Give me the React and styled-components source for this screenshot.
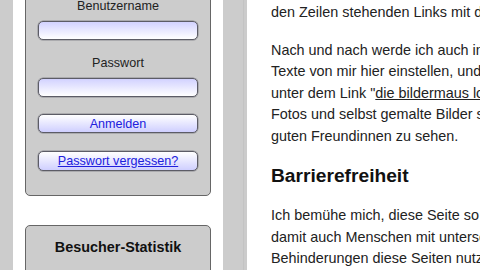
import React from "react";
import styled, { createGlobalStyle } from "styled-components";

const Global = createGlobalStyle`
  html, body {
    margin: 0;
    padding: 0;
    overflow: hidden;
    background: #ffffff;
  }
  body {
    font-family: "Liberation Sans", Arial, sans-serif;
    color: #222222;
  }
`;

function App() {
  return (
    <>
      <Global />
      <Page>
        <Stripe />
        <Sidebar>
          <Box>
            <Label>Benutzername</Label>
            <Input type="text" />
            <Label $gap>Passwort</Label>
            <Input type="password" />
            <Button $top={17}>Anmelden</Button>
            <Button $top={18} $link>
              <a href="#vergessen">Passwort vergessen?</a>
            </Button>
          </Box>
          <Box $second>
            <BoxTitle>Besucher-Statistik</BoxTitle>
          </Box>
        </Sidebar>
        <Stripe $shade />
        <Content>
          <Para $first>
            den Zeilen stehenden Links mit den entsprechenden Seiten verbunden.
          </Para>
          <Para>
            Nach und nach werde ich auch immer mehr Gedichte und
            <br />
            Texte von mir hier einstellen, und außerdem sind
            <br />
            unter dem Link "<Underline href="#bildermaus">die bildermaus lobt</Underline>" einige
            <br />
            Fotos und selbst gemalte Bilder sowie Werke meiner
            <br />
            guten Freundinnen zu sehen.
          </Para>
          <Heading>Barrierefreiheit</Heading>
          <Para>
            Ich bemühe mich, diese Seite so barrierefrei wie möglich zu gestalten,
            <br />
            damit auch Menschen mit unterschiedlichen
            <br />
            Behinderungen diese Seiten nutzen können.
          </Para>
        </Content>
      </Page>
    </>
  );
}

export default App;

const Page = styled.div`
  display: grid;
  grid-template-columns: 13px 210px 24px 1fr;
  width: 480px;
  height: 270px;
  overflow: hidden;
`;

const Stripe = styled.div`
  background: ${(p) =>
    p.$shade
      ? "linear-gradient(to right, #cccccc 0 20px, #c3c3c3 20px 21px, #cbcbcb 21px)"
      : "#cccccc"};
`;

const Sidebar = styled.div`
  display: flex;
  flex-direction: column;
  padding: 0 12px;
`;

const Box = styled.div`
  display: flex;
  flex-direction: column;
  align-items: center;
  background: #cccccc;
  border: 1px solid #666666;
  border-radius: 5px;
  margin-top: ${(p) => (p.$second ? "29px" : "-10px")};
  padding: ${(p) => (p.$second ? "13px 12px 30px" : "8px 12px 24px")};
`;

const Label = styled.div`
  font-size: 12.6px;
  line-height: 15px;
  color: #222222;
  margin-top: ${(p) => (p.$gap ? "16px" : "0")};
  margin-bottom: 7px;
`;

const Input = styled.input`
  box-sizing: border-box;
  width: 160px;
  height: 19px;
  border: 1px solid #5c5c66;
  border-radius: 5px;
  background: linear-gradient(to bottom, #d2d2ff, #ffffff);
  box-shadow: 0 0 0 0.5px #8a8a90;
  outline: none;
`;

const Button = styled.div`
  box-sizing: border-box;
  display: flex;
  align-items: center;
  justify-content: center;
  width: 160px;
  height: ${(p) => (p.$link ? "20px" : "19px")};
  margin-top: ${(p) => p.$top}px;
  border: 1px solid #5c5c66;
  border-radius: 5px;
  background: linear-gradient(to bottom, #ffffff, #cfcfff);
  box-shadow: 0 0 0 0.5px #8a8a90;
  font-size: 12.6px;
  color: #2020dd;

  a {
    color: #2020dd;
    text-decoration: underline;
  }
`;

const BoxTitle = styled.div`
  font-size: 14.4px;
  line-height: 17px;
  font-weight: bold;
  color: #111111;
`;

const Content = styled.div`
  padding: 2px 0 0 24px;
  white-space: nowrap;
  font-size: 14.4px;
  line-height: 21.6px;
`;

const Para = styled.p`
  margin: 0 0 ${(p) => (p.$first ? "16px" : "14.4px")};
`;

const Underline = styled.a`
  color: #222222;
  text-decoration: underline;
`;

const Heading = styled.h2`
  margin: 0 0 14.4px;
  font-size: 19.2px;
  line-height: 28.8px;
  font-weight: bold;
  color: #111111;
`;
